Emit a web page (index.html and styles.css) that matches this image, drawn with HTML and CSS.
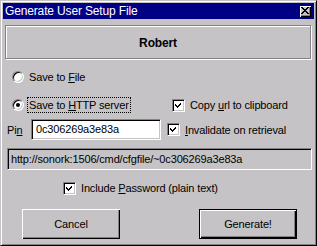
FILE: index.html
```html
<!DOCTYPE html>
<html lang="en">
<head>
    <meta charset="UTF-8">
    <title>Generate User Setup File</title>
    <link rel="stylesheet" href="styles.css">
</head>
<body>
    <div class="window">
        <div class="titlebar">
            <span class="title">Generate User Setup File</span>
            <span class="close-btn">
                <svg width="8" height="7" viewBox="0 0 8 7"><path d="M0 0h2v1h1v1h2V1h1V0h2v1H7v1H6v1H5v1h1v1h1v1h1v1H6V6H5V5H3v1H2v1H0V6h1V5h1V4h1V3H2V2H1V1H0z" fill="#000"/></svg>
            </span>
        </div>

        <div class="content">
            <div class="user-frame">Robert</div>

            <div class="row row-file">
                <label class="radio">
                    <span class="radio-dot"></span>
                    <span>Save to <u>F</u>ile</span>
                </label>
            </div>

            <div class="row row-http">
                <label class="radio left-col">
                    <span class="radio-dot checked"></span>
                    <span class="focus">Save to <u>H</u>TTP server</span>
                </label>
                <label class="check">
                    <span class="check-box"><svg width="7" height="7" viewBox="0 0 7 7"><path d="M6 0v3H5v1H4v1H3v1H2V5H1V4H0V2h1v1h1v1h1V3h1V2h1V1h1z" fill="#000"/></svg></span>
                    <span>Copy <u>u</u>rl to clipboard</span>
                </label>
            </div>

            <div class="row row-pin">
                <span class="pin-label">Pi<u>n</u></span>
                <span class="edit">0c306269a3e83a</span>
                <label class="check">
                    <span class="check-box"><svg width="7" height="7" viewBox="0 0 7 7"><path d="M6 0v3H5v1H4v1H3v1H2V5H1V4H0V2h1v1h1v1h1V3h1V2h1V1h1z" fill="#000"/></svg></span>
                    <span><u>I</u>nvalidate on retrieval</span>
                </label>
            </div>

            <div class="url-box">http://sonork:1506/cmd/cfgfile/~0c306269a3e83a</div>

            <div class="row row-pass">
                <label class="check">
                    <span class="check-box"><svg width="7" height="7" viewBox="0 0 7 7"><path d="M6 0v3H5v1H4v1H3v1H2V5H1V4H0V2h1v1h1v1h1V3h1V2h1V1h1z" fill="#000"/></svg></span>
                    <span>Include <u>P</u>assword (plain text)</span>
                </label>
            </div>

            <div class="buttons">
                <button class="btn">Cancel</button>
                <button class="btn default">Generate!</button>
            </div>
        </div>
    </div>
</body>
</html>
```

FILE: styles.css
```css
* { box-sizing: border-box; }
body {
    margin: 0;
    font-family: 'Liberation Sans', Arial, sans-serif;
    font-size: 11px;
    letter-spacing: -0.15px;
    color: #000;
    background-color: #c6c3c6;
}
u { text-decoration: underline; text-underline-offset: 1px; }
.window {
    width: 317px;
    height: 246px;
    background-color: #c6c3c6;
    border: 1px solid;
    border-color: #c6c3c6 #000 #000 #c6c3c6;
    box-shadow: inset 1px 1px #fff, inset -1px -1px #848284;
    padding: 2px;
}
.titlebar {
    height: 16px;
    background-color: #000084;
    color: #fff;
    display: flex;
    align-items: center;
    justify-content: space-between;
    padding: 0 3px 0 2px;
}
.title {
    font-size: 12px;
}
.close-btn {
    width: 11px;
    height: 11px;
    background-color: #c6c3c6;
    box-shadow: inset 1px 1px #fff, inset -1px -1px #000, inset -2px -2px #848284;
    display: flex;
    align-items: center;
    justify-content: center;
    padding: 0 1px 1px 0;
}
.close-btn svg { display: block; }
.content {
    padding: 6px 0 0 2px;
}
.user-frame {
    width: 306px;
    height: 34px;
    border: 1px solid #848284;
    box-shadow: 1px 1px #fff, inset 1px 1px #fff;
    display: flex;
    align-items: center;
    justify-content: center;
    font-weight: bold;
    font-size: 12px;
    padding-top: 1px;
}
.row {
    display: flex;
    align-items: center;
    height: 16px;
}
.row-file { margin-top: 10px; padding-left: 7px; }
.row-http { margin-top: 12px; padding-left: 7px; }
.row-pin { margin-top: 6px; height: 21px; padding-left: 2px; }
.row-pass { margin-top: 10px; padding-left: 58px; }
.left-col { width: 160px; }
.radio, .check {
    display: flex;
    align-items: center;
}
.radio-dot {
    position: relative;
    width: 12px;
    height: 12px;
    border-radius: 50%;
    background-color: #fff;
    border: 1px solid;
    border-color: #848284 #fff #fff #848284;
    box-shadow: inset 1px 1px #000, inset -1px -1px #c6c3c6;
    margin-right: 5px;
}
.radio-dot.checked::after {
    content: '';
    position: absolute;
    left: 3px;
    top: 3px;
    width: 4px;
    height: 4px;
    border-radius: 50%;
    background-color: #000;
}
.focus {
    outline: 1px dotted #000;
    outline-offset: 0;
    padding: 1px 1px;
    margin-left: -1px;
}
.check-box {
    width: 13px;
    height: 13px;
    background-color: #fff;
    border: 1px solid;
    border-color: #848284 #fff #fff #848284;
    box-shadow: inset 1px 1px #000, inset -1px -1px #c6c3c6;
    margin-right: 5px;
    padding: 2px 0 0 2px;
}
.check-box svg { display: block; }
.pin-label {
    width: 24px;
}
.edit {
    width: 130px;
    height: 21px;
    background-color: #fff;
    border: 1px solid;
    border-color: #848284 #fff #fff #848284;
    box-shadow: inset 1px 1px #000, inset -1px -1px #c6c3c6;
    padding: 2px 0 0 4px;
    line-height: 15px;
    margin-right: 6px;
}
.url-box {
    margin: 8px 0 0 2px;
    width: 305px;
    height: 22px;
    border: 1px solid;
    border-color: #848284 #fff #fff #848284;
    box-shadow: inset 1px 1px #000, inset -1px -1px #c6c3c6;
    padding: 3px 0 0 3px;
    line-height: 15px;
}
.buttons {
    display: flex;
    margin-top: 13px;
    padding-left: 17px;
    gap: 79px;
}
.btn {
    width: 98px;
    height: 30px;
    font-family: inherit;
    font-size: 11px;
    letter-spacing: inherit;
    color: #000;
    background-color: #c6c3c6;
    border: none;
    box-shadow: inset 1px 1px #fff, inset -1px -1px #000, inset -2px -2px #848284;
    padding: 0;
}
.btn.default {
    border: 1px solid #000;
}
```
